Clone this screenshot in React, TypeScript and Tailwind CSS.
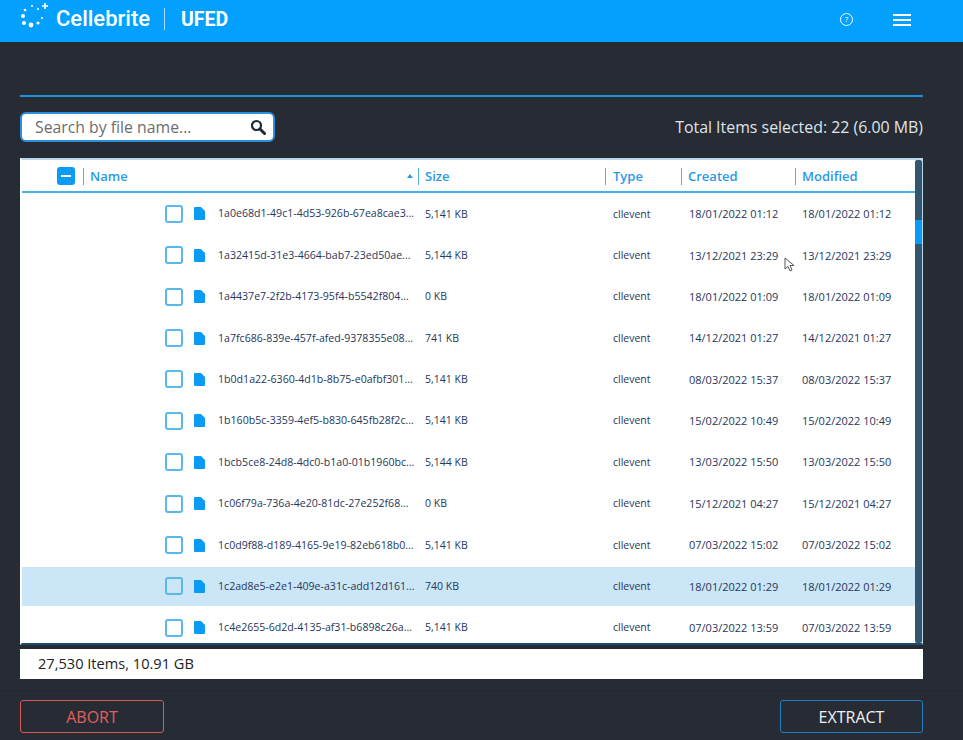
const files = [
  { name: '1a0e68d1-49c1-4d53-926b-67ea8cae3...', size: '5,141 KB', created: '18/01/2022 01:12' },
  { name: '1a32415d-31e3-4664-bab7-23ed50ae...', size: '5,144 KB', created: '13/12/2021 23:29' },
  { name: '1a4437e7-2f2b-4173-95f4-b5542f804...', size: '0 KB', created: '18/01/2022 01:09' },
  { name: '1a7fc686-839e-457f-afed-9378355e08...', size: '741 KB', created: '14/12/2021 01:27' },
  { name: '1b0d1a22-6360-4d1b-8b75-e0afbf301...', size: '5,141 KB', created: '08/03/2022 15:37' },
  { name: '1b160b5c-3359-4ef5-b830-645fb28f2c...', size: '5,141 KB', created: '15/02/2022 10:49' },
  { name: '1bcb5ce8-24d8-4dc0-b1a0-01b1960bc...', size: '5,144 KB', created: '13/03/2022 15:50' },
  { name: '1c06f79a-736a-4e20-81dc-27e252f68...', size: '0 KB', created: '15/12/2021 04:27' },
  { name: '1c0d9f88-d189-4165-9e19-82eb618b0...', size: '5,141 KB', created: '07/03/2022 15:02' },
  { name: '1c2ad8e5-e2e1-409e-a31c-add12d161...', size: '740 KB', created: '18/01/2022 01:29', active: true },
  { name: '1c4e2655-6d2d-4135-af31-b6898c26a...', size: '5,141 KB', created: '07/03/2022 13:59' },
];

const font = { fontFamily: '"Open Sans", sans-serif' };

function Logo() {
  const dots = [
    [32, 6, 1], [25, 10, 1.3], [38, 9, 1], [23, 16, 2], [42, 18, 1], [24, 23, 2], [31, 25, 2.4], [38, 23, 1.6],
  ];
  return (
    <svg width="30" height="30" viewBox="18 0 30 30" className="block self-start">
      {dots.map(([x, y, r], i) => (
        <circle key={i} cx={x} cy={y} r={r} fill="#fff" />
      ))}
      <path d="M45 3v6M42 6h6" stroke="#fff" strokeWidth="1.6" />
    </svg>
  );
}

function FileIcon() {
  return (
    <svg width="11" height="13" viewBox="0 0 11 13" className="block">
      <path d="M1 0h6l4 4v8a1 1 0 0 1-1 1H1a1 1 0 0 1-1-1V1a1 1 0 0 1 1-1z" fill="#0a9bf5" />
    </svg>
  );
}

function HeaderCell({ label, className }: { label: string; className: string }) {
  return (
    <div className={`flex h-[17px] items-center border-l-[1.5px] border-[#4fb3ea] ${className}`}>
      <span className="pt-[1px] text-[13px] font-semibold text-[#2a9ae6]">{label}</span>
    </div>
  );
}

export default function App() {
  return (
    <div className="relative flex h-[740px] w-[963px] flex-col overflow-hidden bg-[#272b34]" style={font}>
      <header className="flex h-[42px] shrink-0 items-center bg-[#03a1fd] text-white">
        <div className="ml-[18px] flex h-[42px]">
          <Logo />
        </div>
        <span className="mb-[6px] ml-[8px] text-[22px] font-medium" style={{ fontFamily: 'Roboto, sans-serif' }}>
          Cellebrite
        </span>
        <div className="mb-[4px] ml-[14px] h-[22px] w-px bg-[#a9dcfa]" />
        <span className="mb-[2px] ml-[16px] text-[19.5px] font-bold" style={{ fontFamily: 'Roboto, sans-serif' }}>
          UFED
        </span>
        <div className="mb-[4px] ml-auto flex h-[13px] w-[13px] items-center justify-center rounded-full border border-white text-[8px] leading-none">
          ?
        </div>
        <div className="mb-[3px] ml-[40px] mr-[52px] flex w-[18px] flex-col gap-[3px]">
          <div className="h-[2px] bg-white" />
          <div className="h-[2px] bg-white" />
          <div className="h-[2px] bg-white" />
        </div>
      </header>

      <div className="ml-[20px] mr-[40px] mt-[53px] h-[2px] shrink-0 bg-[#1a93dc]" />

      <div className="ml-[20px] mr-[40px] mt-[15px] flex h-[30px] shrink-0 items-center justify-between">
        <div className="flex h-[30px] w-[255px] items-center justify-between rounded-[6px] border-2 border-[#2a8fdc] bg-white pl-[13px] pr-[7px]">
          <span className="pt-[2px] text-[15.8px] text-[#6d6d6d]">Search by file name...</span>
          <svg width="16" height="16" viewBox="0 0 16 16" className="block">
            <circle cx="6.5" cy="6.5" r="4.5" fill="none" stroke="#1f2933" strokeWidth="2.2" />
            <path d="M10 10l4.5 4.5" stroke="#1f2933" strokeWidth="3" strokeLinecap="round" />
          </svg>
        </div>
        <span className="pt-[2px] text-[15.9px] font-medium text-[#dfe5ea]">Total Items selected: 22 (6.00 MB)</span>
      </div>

      <div className="ml-[20px] mr-[40px] mt-[16px] flex h-[487px] shrink-0 border-y-2 border-l-2 border-r border-t-[#b9d8ea] border-r-[#b9d8ea] border-b-[#1d4a6e] border-l-white bg-white">
        <div className="flex min-w-0 flex-1 flex-col">
          <div className="flex h-[33px] shrink-0 items-center border-b-2 border-[#44b3e6] pt-[1px]">
            <div className="ml-[35px] flex h-[18px] w-[18px] items-center justify-center rounded-[3px] bg-[#0a9bf5]">
              <div className="h-[2px] w-[10px] bg-white" />
            </div>
            <div className="ml-[8px] flex h-[17px] w-[335px] items-center justify-between border-l-[1.5px] border-[#4fb3ea] pl-[6px] pr-[5px]">
              <span className="pt-[1px] text-[13px] font-semibold text-[#2a9ae6]">Name</span>
              <span className="h-0 w-0 border-x-[3px] border-b-[4px] border-x-transparent border-b-[#2a9ae6]" />
            </div>
            <HeaderCell label="Size" className="w-[187px] pl-[6px]" />
            <HeaderCell label="Type" className="w-[76px] pl-[7px]" />
            <HeaderCell label="Created" className="w-[114px] pl-[6px]" />
            <HeaderCell label="Modified" className="flex-1 pl-[6px]" />
          </div>
          <div className="min-h-0 flex-1 overflow-hidden pt-[1.4px]">
            {files.map(file => (
              <div
                key={file.name}
                className={`mb-[2.4px] flex h-[39px] items-center text-[#27365a] ${file.active ? 'bg-[#cbe6f6]' : ''}`}
              >
                <div
                  className={`ml-[143px] h-[18px] w-[18px] shrink-0 rounded-[3px] border-2 border-[#5bb8ea] ${file.active ? '' : 'bg-white'}`}
                />
                <div className="ml-[11px] shrink-0">
                  <FileIcon />
                </div>
                <span className="ml-[13px] w-[207px] shrink-0 whitespace-nowrap pt-[1px] text-[10.6px]">{file.name}</span>
                <span className="w-[188px] shrink-0 pt-[1px] text-[10.5px]">{file.size}</span>
                <span className="w-[76px] shrink-0 pt-[1px] text-[10.5px]">cllevent</span>
                <span className="w-[113px] shrink-0 whitespace-nowrap pt-[1px] text-[11px]">{file.created}</span>
                <span className="whitespace-nowrap pt-[1px] text-[11px]">{file.created}</span>
              </div>
            ))}
          </div>
        </div>
        <div className="flex w-[7px] shrink-0 flex-col overflow-hidden rounded-[2px] bg-[#33556f]">
          <div className="h-[60px] shrink-0" />
          <div className="h-[24px] shrink-0 bg-[#0a9bf5]" />
        </div>
      </div>

      <div className="ml-[20px] mr-[40px] mt-[4px] flex h-[30px] shrink-0 items-center bg-white pl-[18px] text-[14.6px] text-[#222]">
        27,530 Items, 10.91 GB
      </div>

      <div className="mt-[11px] flex flex-1 items-start justify-between border-t border-[#23262d] pl-[20px] pr-[40px] pt-[9px]">
        <button className="h-[33px] w-[144px] rounded-[3px] border border-[#d4585c] text-[16px] text-[#e0605f]">ABORT</button>
        <button className="h-[33px] w-[143px] rounded-[3px] border border-[#1c7fc0] text-[16px] font-medium text-[#eef2f5]">EXTRACT</button>
      </div>

      <svg width="12" height="16" viewBox="0 0 12 16" className="absolute left-[784px] top-[257px]">
        <path d="M1 1v11l3-2.5 2 4.5 2-1-2-4.5h4z" fill="#fff" stroke="#555" strokeWidth="1" />
      </svg>
    </div>
  );
}
